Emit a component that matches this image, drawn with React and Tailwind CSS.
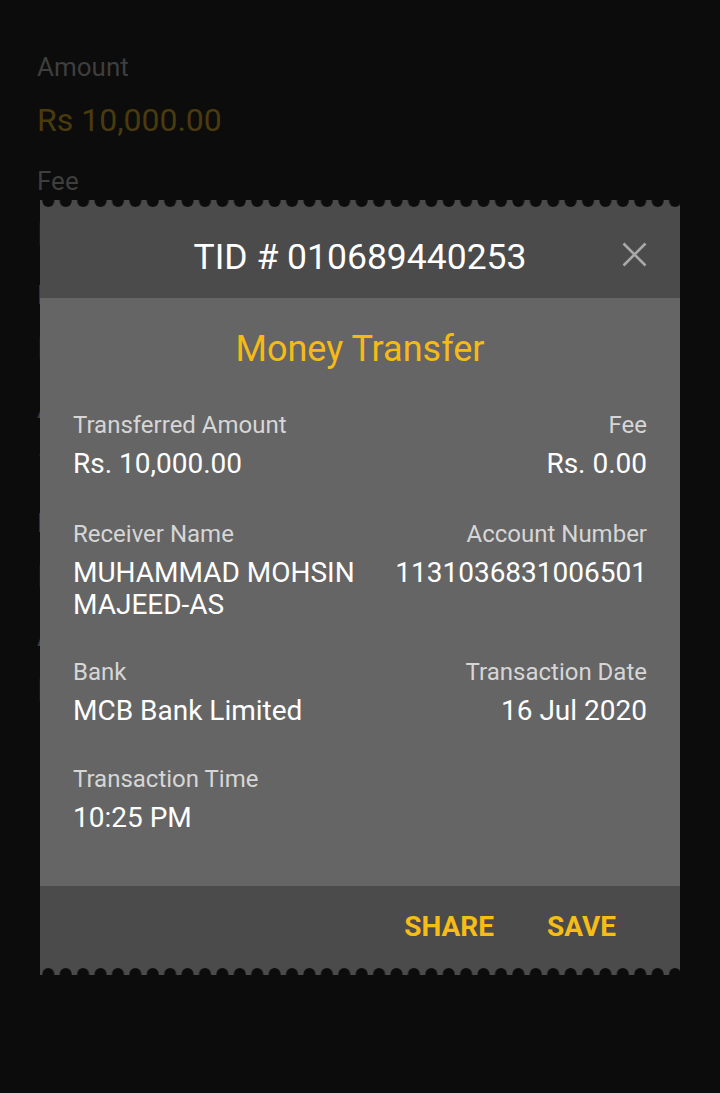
const BACKDROP = [
    { label: "Amount", value: "Rs 10,000.00" },
    { label: "Fee", value: "Rs 0.00" },
    { label: "Bank", value: "MCB Bank Limited" },
    { label: "Account Number", value: "1131036831006501" },
    { label: "Receiver Name", value: "MUHAMMAD MOHSIN" },
    { label: "Account Title", value: "MAJEED-AS" },
];

const ROWS = [
    {
        gap: "",
        left: { label: "Transferred Amount", value: ["Rs. 10,000.00"] },
        right: { label: "Fee", value: ["Rs. 0.00"] },
    },
    {
        gap: "mt-[38px]",
        left: { label: "Receiver Name", value: ["MUHAMMAD MOHSIN", "MAJEED-AS"] },
        right: { label: "Account Number", value: ["1131036831006501"] },
    },
    {
        gap: "mt-[35px]",
        left: { label: "Bank", value: ["MCB Bank Limited"] },
        right: { label: "Transaction Date", value: ["16 Jul 2020"] },
    },
    {
        gap: "mt-[36px]",
        left: { label: "Transaction Time", value: ["10:25 PM"] },
        right: null,
    },
];

export default function App() {
    return (
        <div className="relative min-h-[1093px] w-full overflow-hidden bg-[#0c0c0c] font-['Roboto','Noto_Sans',sans-serif]">
            {/* form behind the dialog */}
            <div className="px-[37px] pt-[51px]">
                {BACKDROP.map((item, i) => (
                    <div key={item.label} className={i === 0 ? "" : "mt-[25px]"}>
                        <div className="text-[26px] leading-[32px] text-[#3e3e3e]">{item.label}</div>
                        <div className="mt-[17px] text-[32px] leading-[40px] text-[#4a3b0d]">{item.value}</div>
                    </div>
                ))}
            </div>

            {/* receipt dialog */}
            <div className="absolute left-[40px] right-[40px] top-[200px]">
                <div className="relative bg-[#4b4b4b]">
                    <Scallops id="top" cy={1} />
                    <div className="flex h-[90px] items-center justify-center pt-[7px]">
                        <h2 className="text-[35.5px] leading-[40px] text-white">TID # 010689440253</h2>
                    </div>
                    <button className="absolute right-[33px] top-[42px] text-[#a9a9a9]">
                        <svg width="25" height="25" viewBox="0 0 25 25" fill="none" stroke="currentColor" strokeWidth="2.6">
                            <path d="M1.5 1.5L23.5 23.5M23.5 1.5L1.5 23.5" />
                        </svg>
                    </button>
                </div>

                <div className="bg-[#656565] px-[33px] pb-[52px] pt-[31px]">
                    <h3 className="text-center text-[36px] leading-[40px] text-[#f6ba17]">Money Transfer</h3>
                    <div className="mt-[40px]">
                        {ROWS.map((row, i) => (
                            <div key={i} className={`flex justify-between ${row.gap}`}>
                                <Field item={row.left} />
                                {row.right && <Field item={row.right} right />}
                            </div>
                        ))}
                    </div>
                </div>

                <div className="bg-[#4b4b4b]">
                    <div className="flex h-[81px] items-center justify-end gap-[53px] pr-[64px]">
                        <button className="text-[28px] font-bold leading-none text-[#f6bd16]">SHARE</button>
                        <button className="text-[28px] font-bold leading-none text-[#f6bd16]">SAVE</button>
                    </div>
                    <Scallops id="bottom" cy={7} />
                </div>
            </div>
        </div>
    );
}

function Field({ item, right }) {
    return (
        <div className={right ? "text-right" : ""}>
            <div className="text-[24px] leading-[32px] text-[#d6d6d6]">{item.label}</div>
            <div className="mt-[7px] text-[28px] leading-[32px] text-white">
                {item.value.map((line) => (
                    <div key={line}>{line}</div>
                ))}
            </div>
        </div>
    );
}

function Scallops({ id, cy }) {
    return (
        <svg className="block h-[8px] w-full" aria-hidden="true">
            <defs>
                <pattern id={`scallop-${id}`} x="0" y="0" width="17.41" height="8" patternUnits="userSpaceOnUse">
                    <circle cx="8.3" cy={cy} r="6" fill="#0c0c0c" />
                </pattern>
            </defs>
            <rect width="100%" height="8" fill={`url(#scallop-${id})`} />
        </svg>
    );
}
